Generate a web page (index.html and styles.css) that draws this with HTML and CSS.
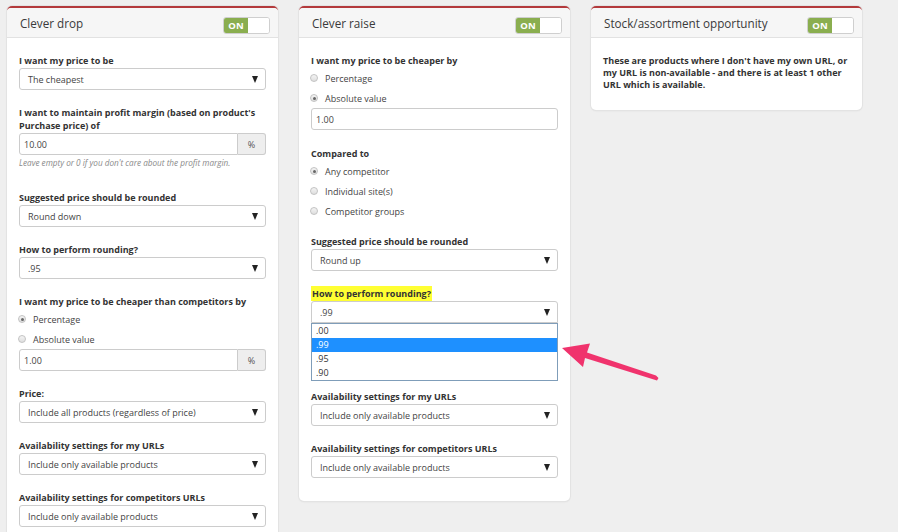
FILE: index.html
```html
<!DOCTYPE html>
<html>
<head>
<meta charset="utf-8">
<link rel="stylesheet" href="styles.css">
</head>
<body>
<div class="page">
  <section class="card">
    <header class="card-head">
      <h2 class="card-title">Clever drop</h2>
      <div class="toggle"><span class="toggle-on">ON</span><span class="toggle-off"></span></div>
    </header>
    <div class="card-body">
      <div class="group">
        <div class="label">I want my price to be</div>
        <div class="select"><span>The cheapest</span><span class="caret"></span></div>
      </div>
      <div class="group">
        <div class="label">I want to maintain profit margin (based on product's Purchase price) of</div>
        <div class="input-group"><div class="input">10.00</div><div class="addon">%</div></div>
        <div class="help">Leave empty or 0 if you don't care about the profit margin.</div>
      </div>
      <div class="group">
        <div class="label">Suggested price should be rounded</div>
        <div class="select"><span>Round down</span><span class="caret"></span></div>
      </div>
      <div class="group">
        <div class="label">How to perform rounding?</div>
        <div class="select"><span>.95</span><span class="caret"></span></div>
      </div>
      <div class="group">
        <div class="label">I want my price to be cheaper than competitors by</div>
        <div class="radio checked"><span class="dot"></span>Percentage</div>
        <div class="radio"><span class="dot"></span>Absolute value</div>
        <div class="input-group"><div class="input">1.00</div><div class="addon">%</div></div>
      </div>
      <div class="group">
        <div class="label">Price:</div>
        <div class="select"><span>Include all products (regardless of price)</span><span class="caret"></span></div>
      </div>
      <div class="group">
        <div class="label">Availability settings for my URLs</div>
        <div class="select"><span>Include only available products</span><span class="caret"></span></div>
      </div>
      <div class="group">
        <div class="label">Availability settings for competitors URLs</div>
        <div class="select"><span>Include only available products</span><span class="caret"></span></div>
      </div>
    </div>
  </section>

  <section class="card">
    <header class="card-head">
      <h2 class="card-title">Clever raise</h2>
      <div class="toggle"><span class="toggle-on">ON</span><span class="toggle-off"></span></div>
    </header>
    <div class="card-body card-body-2">
      <div class="group group-first">
        <div class="label">I want my price to be cheaper by</div>
        <div class="radio"><span class="dot"></span>Percentage</div>
        <div class="radio checked"><span class="dot"></span>Absolute value</div>
        <div class="input">1.00</div>
      </div>
      <div class="group group-radios">
        <div class="label">Compared to</div>
        <div class="radio checked"><span class="dot"></span>Any competitor</div>
        <div class="radio"><span class="dot"></span>Individual site(s)</div>
        <div class="radio"><span class="dot"></span>Competitor groups</div>
      </div>
      <div class="group">
        <div class="label">Suggested price should be rounded</div>
        <div class="select"><span>Round up</span><span class="caret"></span></div>
      </div>
      <div class="group group-open">
        <div class="label"><span class="mark">How to perform rounding?</span></div>
        <div class="select select-open"><span>.99</span><span class="caret"></span></div>
        <ul class="listbox">
          <li>.00</li>
          <li class="active">.99</li>
          <li>.95</li>
          <li>.90</li>
        </ul>
      </div>
      <div class="group">
        <div class="label">Availability settings for my URLs</div>
        <div class="select"><span>Include only available products</span><span class="caret"></span></div>
      </div>
      <div class="group last">
        <div class="label">Availability settings for competitors URLs</div>
        <div class="select"><span>Include only available products</span><span class="caret"></span></div>
      </div>
    </div>
  </section>

  <section class="card">
    <header class="card-head">
      <h2 class="card-title">Stock/assortment opportunity</h2>
      <div class="toggle"><span class="toggle-on">ON</span><span class="toggle-off"></span></div>
    </header>
    <div class="card-body card-body-3">
      <p class="info">These are products where I don't have my own URL, or my URL is non-available - and there is at least 1 other URL which is available.</p>
    </div>
  </section>

  <svg class="pointer" width="120" height="60" viewBox="550 335 120 60" xmlns="http://www.w3.org/2000/svg">
    <polygon fill="#f0336d" points="562,348 590,343.5 587,352.5 656,375.5 658.5,378 657,380.5 585,358 583,367"/>
  </svg>
</div>
</body>
</html>
```

FILE: styles.css
```css
* { box-sizing: border-box; }

html, body {
  margin: 0;
  padding: 0;
}

body {
  background: #efefef;
  font-family: "Open Sans", "Liberation Sans", sans-serif;
  color: #333;
  width: 898px;
  height: 532px;
  overflow: hidden;
}

.page {
  position: relative;
  display: flex;
  align-items: flex-start;
  gap: 21px;
  padding: 6px 0 0 7px;
}

.card {
  width: 271px;
  background: #fff;
  border-top: 2px solid #b3393b;
  border-radius: 5px;
  box-shadow: 0 0 0 1px #e3e3e3, 0 1px 2px rgba(0, 0, 0, 0.08);
  flex: none;
}

.card-head {
  height: 30px;
  background: #f6f6f6;
  border-bottom: 1px solid #e2e2e2;
  border-radius: 4px 4px 0 0;
  display: flex;
  align-items: center;
  justify-content: space-between;
  padding: 0 8px 0 13px;
}

.card-title {
  margin: 0;
  font-size: 11.7px;
  font-weight: 400;
  color: #3a3a3a;
}

.toggle {
  display: flex;
  width: 47px;
  height: 17px;
  margin-top: 5px;
  border: 1px solid #cfcfcf;
  border-radius: 3px;
  overflow: hidden;
  background: #fff;
}

.toggle-on {
  width: 24px;
  background: #8aae4f;
  color: #fff;
  font-size: 9.5px;
  font-weight: 700;
  line-height: 15px;
  text-align: center;
}

.toggle-off {
  flex: 1;
  background: #fff;
}

.card-body {
  padding: 16px 12px 0 12px;
}

.group {
  margin-bottom: 16px;
}

.label {
  font-size: 9px;
  font-weight: 700;
  line-height: 13px;
  color: #333;
  margin-bottom: 1px;
}

.mark {
  background: #ffff33;
  padding: 1px 1px;
}

.select {
  height: 22px;
  border: 1px solid #cccccc;
  border-radius: 3px;
  background: #fff;
  display: flex;
  align-items: center;
  justify-content: space-between;
  padding: 0 7px 0 8px;
  font-size: 9px;
  color: #444;
}

.caret {
  width: 0;
  height: 0;
  border-left: 3.5px solid transparent;
  border-right: 3.5px solid transparent;
  border-top: 7px solid #222;
}

.input-group {
  display: flex;
  height: 22px;
}

.input {
  height: 22px;
  border: 1px solid #cccccc;
  border-radius: 3px;
  background: #fff;
  display: flex;
  align-items: center;
  padding: 0 4px;
  font-size: 9px;
  color: #444;
}

.input-group .input {
  flex: 1;
  border-radius: 3px 0 0 3px;
}

.addon {
  width: 28px;
  border: 1px solid #cccccc;
  border-left: none;
  border-radius: 0 3px 3px 0;
  background: #eeeeee;
  display: flex;
  align-items: center;
  justify-content: center;
  font-size: 9px;
  color: #555;
}

.help {
  font-size: 8.2px;
  font-style: italic;
  color: #8a8a8a;
  line-height: 12px;
  margin-top: 2px;
  margin-bottom: 22px;
}

.radio {
  height: 20px;
  display: flex;
  align-items: center;
  font-size: 9px;
  color: #444;
}

.dot {
  width: 8px;
  height: 8px;
  border-radius: 50%;
  border: 1px solid #c3c3c3;
  background: linear-gradient(#f4f4f4, #dedede);
  margin: 0 7px 0 -1px;
  display: flex;
  align-items: center;
  justify-content: center;
}

.radio.checked .dot::after {
  content: "";
  width: 3px;
  height: 3px;
  border-radius: 50%;
  background: #666;
}

.group-first {
  margin-bottom: 17px;
}

.group-radios {
  margin-bottom: 14px;
}

.select-open {
  border-radius: 3px 3px 0 0;
}

.listbox {
  list-style: none;
  margin: 0 0 9px 0;
  padding: 0;
  border: 1px solid #7f9db9;
  background: #fff;
}

.listbox li {
  height: 14px;
  line-height: 14px;
  font-size: 9px;
  color: #333;
  padding: 0 4px;
}

.listbox li.active {
  background: #1e90ff;
  color: #fff;
}

.group-open {
  margin-bottom: 9px;
}

.group.last {
  margin-bottom: 23px;
}

.card-body-3 {
  padding: 17px 12px 19px 12px;
}

.info {
  margin: 0;
  font-size: 9px;
  font-weight: 700;
  line-height: 12px;
  color: #333;
}

.pointer {
  position: absolute;
  left: 550px;
  top: 335px;
}
```
